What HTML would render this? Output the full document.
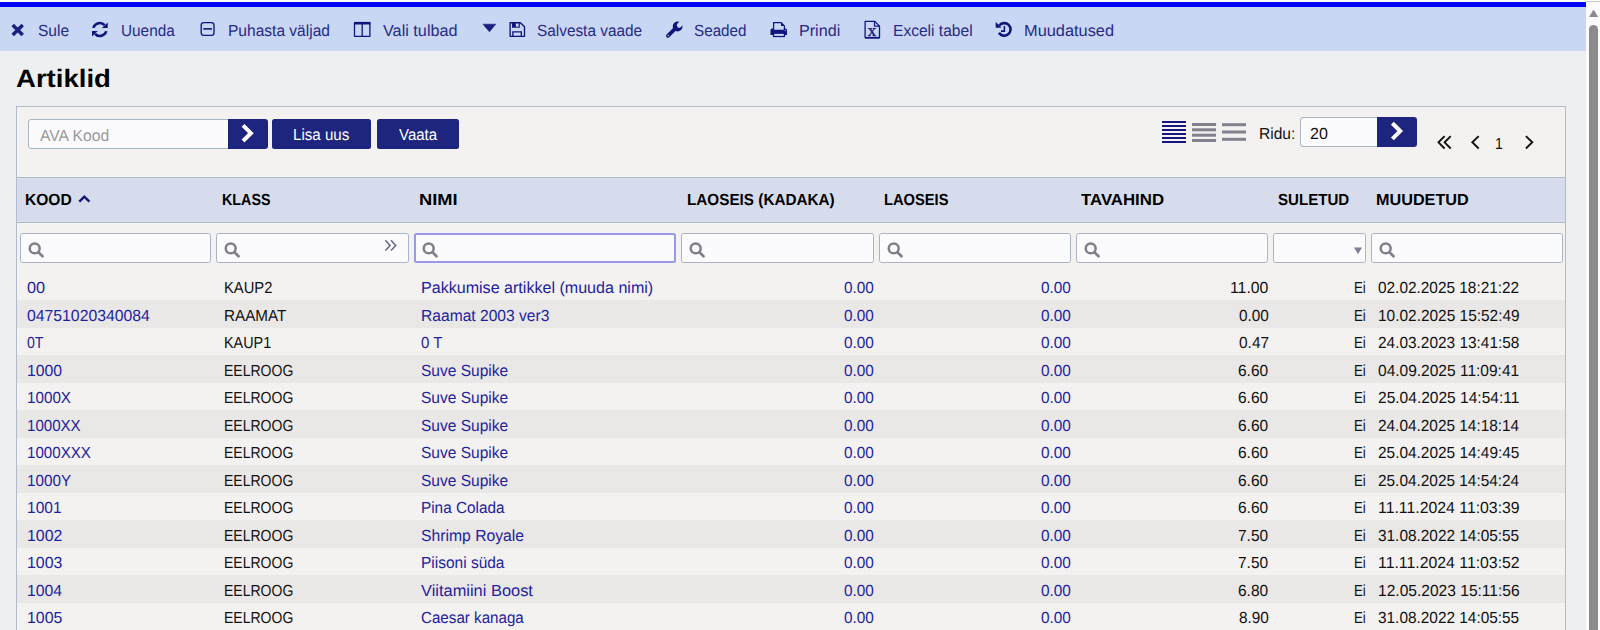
<!DOCTYPE html>
<html lang="et">
<head>
<meta charset="utf-8">
<title>Artiklid</title>
<style>
html,body{margin:0;padding:0}
body{text-rendering:geometricPrecision;width:1600px;height:630px;overflow:hidden;background:#eeeff1;font-family:"Liberation Sans",sans-serif;position:relative}
.t{position:absolute;white-space:pre;display:block}
a{color:inherit;text-decoration:none}
h1{margin:0;font-size:0}
svg{position:absolute;display:block;overflow:visible}
.topline{position:absolute;left:0;top:0;width:1586px;height:2px;background:#fdfdfc}
.bluebar{position:absolute;left:0;top:2px;width:1586px;height:5px;background:#0000ff}
.toolbar-bg{position:absolute;left:0;top:7px;width:1586px;height:44px;background:#c9d7f4}
.panel-bg{position:absolute;left:16px;top:106px;width:1548px;height:540px;border:1px solid #b3bacb;background:#f3f2f1}
.btn{position:absolute;border:0;padding:0;margin:0;background:#1d257e;border-radius:2.5px}
.inp{position:absolute;box-sizing:border-box;border:1px solid #abb3c7;border-radius:2.5px;background:#fbfbfe}
.inp.focus{border:2px solid #9799ea}
table.grid{border-collapse:collapse;border-spacing:0}
td,th{padding:0;font-weight:normal}
.hd-bg{position:absolute;left:17px;top:177px;width:1548px;height:44px;background:#d7dced;border-top:1px solid #b0b8cb;border-bottom:1px solid #b0b8cb}
td.stripe{position:absolute;left:17px;width:1548px;height:27.5px;background:#eae8e7;padding:0}
.sb{position:absolute;left:1586px;top:0;width:14px;height:630px;background:#fcfcfc}
.sbline{position:absolute;left:0;top:1px;width:14px;height:1px;background:#c9c9c9}
.sbthumb{position:absolute;left:3.3px;top:25px;width:8.7px;height:620px;border-radius:4.5px;background:#8b8b8b}

</style>
</head>
<body>
<div class="topline"></div>
<div class="bluebar"></div>
<nav class="toolbar"><div class="toolbar-bg"></div>
<a class="tb"><svg style="left:8px;top:20px" width="20" height="20" viewBox="8 20 20 20" ><path d="M12.7 24.9L22.7 34.9M22.7 24.9L12.7 34.9" stroke="#1a1f80" stroke-width="3.5" fill="none"/></svg><span class="t" style="left:37.51px;top:20.80px;transform-origin:0 0;transform:scaleX(0.9656);font-size:16.1px;line-height:20px;color:#262b85;">Sule</span></a>
<a class="tb"><svg style="left:88px;top:18px" width="24" height="24" viewBox="88 18 24 24" ><path d="M93.40 29.50A6.45 6.45 0 0 1 104.64 25.18" stroke="#13137c" stroke-width="2.6" fill="none"/><rect x="90" y="27.9" width="7" height="3" fill="#c9d7f4"/><path d="M107.7 22.4V28.1H101.9Z" fill="#13137c"/><g transform="rotate(180 99.85 29.5)"><path d="M93.40 29.50A6.45 6.45 0 0 1 104.64 25.18" stroke="#13137c" stroke-width="2.6" fill="none"/><rect x="90" y="27.9" width="7" height="3" fill="#c9d7f4"/><path d="M107.7 22.4V28.1H101.9Z" fill="#13137c"/></g></svg><span class="t" style="left:120.84px;top:20.80px;transform-origin:0 0;transform:scaleX(0.9533);font-size:16.1px;line-height:20px;color:#262b85;">Uuenda</span></a>
<a class="tb"><svg style="left:197px;top:18px" width="22" height="22" viewBox="197 18 22 22" ><rect x="201.2" y="22.6" width="12.8" height="12.8" rx="2.6" fill="none" stroke="#13137c" stroke-width="1.35"/><path d="M203.3 28.9H212" stroke="#13137c" stroke-width="1.6"/></svg><span class="t" style="left:228.09px;top:20.80px;transform-origin:0 0;transform:scaleX(0.9656);font-size:16.1px;line-height:20px;color:#262b85;">Puhasta väljad</span></a>
<a class="tb"><svg style="left:350px;top:18px" width="24" height="24" viewBox="350 18 24 24" ><path d="M354.5 23H369.9V36.3H354.5Z" fill="none" stroke="#13137c" stroke-width="1.3" stroke-linejoin="round"/><path d="M354 23.2H370.4" stroke="#13137c" stroke-width="2.6"/><path d="M362.2 23V36.3" stroke="#13137c" stroke-width="1.3"/></svg><span class="t" style="left:383.00px;top:20.80px;transform-origin:0 0;transform:scaleX(1.0084);font-size:16.1px;line-height:20px;color:#262b85;">Vali tulbad</span></a>
<a class="tb"><svg style="left:480px;top:20px" width="20" height="16" viewBox="480 20 20 16" ><path d="M483 24.2H495.8L489.4 31.8Z" fill="#1a1f80" stroke="#1a1f80" stroke-width="0.6" stroke-linejoin="round"/></svg><svg style="left:506px;top:18px" width="24" height="24" viewBox="506 18 24 24" ><path d="M510.1 22.7H520.4L524.5 26.8V36.3H510.1Z" fill="none" stroke="#13137c" stroke-width="1.35" stroke-linejoin="round"/><path fill-rule="evenodd" d="M512 22.7H519.8V27.7H512ZM515.9 23.1V26.8H518.6V23.1Z" fill="#13137c"/><path d="M512.9 36.3V31.9H521.3V36.3" fill="none" stroke="#13137c" stroke-width="1.35"/></svg><span class="t" style="left:537.02px;top:20.80px;transform-origin:0 0;transform:scaleX(0.9547);font-size:16.1px;line-height:20px;color:#262b85;">Salvesta vaade</span></a>
<a class="tb"><svg style="left:662px;top:18px" width="24" height="24" viewBox="662 18 24 24" ><path d="M667.9 35.9L675.2 28.6" stroke="#13137c" stroke-width="3.7" stroke-linecap="round"/><circle cx="677.6" cy="26.5" r="4.9" fill="#13137c"/><path d="M679.2 25.2L685 19.4" stroke="#c9d7f4" stroke-width="4.8" stroke-linecap="round"/><circle cx="668.3" cy="35.5" r="0.7" fill="#c9d7f4"/></svg><span class="t" style="left:694.02px;top:20.80px;transform-origin:0 0;transform:scaleX(0.9464);font-size:16.1px;line-height:20px;color:#262b85;">Seaded</span></a>
<a class="tb"><svg style="left:767px;top:18px" width="24" height="24" viewBox="767 18 24 24" ><path d="M773.6 30.5V22.5H781L784.4 25.9V30.5Z" fill="#c9d7f4" stroke="#13137c" stroke-width="1.25" stroke-linejoin="round"/><path d="M781 22.5V25.9H784.4Z" fill="#13137c"/><path d="M770.5 35V30Q770.5 28.4 772.1 28.4H773V29.7H785V28.4H785.4Q787 28.4 787 30V35Z" fill="#13137c"/><rect x="773.6" y="33.2" width="10.8" height="3.3" fill="#c9d7f4" stroke="#13137c" stroke-width="1.25"/><circle cx="785.3" cy="30.5" r="0.6" fill="#c9d7f4"/></svg><span class="t" style="left:799.04px;top:20.80px;transform-origin:0 0;transform:scaleX(1.0015);font-size:16.1px;line-height:20px;color:#262b85;">Prindi</span></a>
<a class="tb"><svg style="left:860px;top:16px" width="26" height="26" viewBox="860 16 26 26" ><path d="M865.1 21.4H874.8L879.5 26.1V37.6H865.1Z" fill="none" stroke="#13137c" stroke-width="1.3" stroke-linejoin="round"/><path d="M874.5 21.4V26.2H879.4" fill="none" stroke="#13137c" stroke-width="1.2"/><path d="M865 37.8H879.6" stroke="#13137c" stroke-width="1.7"/><text x="872.1" y="35.9" text-anchor="middle" font-family="Liberation Serif, serif" font-weight="400" font-size="17" fill="#13137c" stroke="#13137c" stroke-width="0.35">x</text></svg><span class="t" style="left:892.58px;top:20.80px;transform-origin:0 0;transform:scaleX(0.9673);font-size:16.1px;line-height:20px;color:#262b85;">Exceli tabel</span></a>
<a class="tb"><svg style="left:992px;top:18px" width="24" height="24" viewBox="992 18 24 24" ><path d="M999.29 25.52A6.3 6.3 0 1 1 998.91 32.74" stroke="#13137c" stroke-width="2.6" fill="none"/><path d="M995.7 22V27.8H1001.6Z" fill="#13137c"/><path d="M1004.4 26V31.1H1001" fill="none" stroke="#13137c" stroke-width="1.55"/></svg><span class="t" style="left:1024.02px;top:20.80px;transform-origin:0 0;transform:scaleX(1.0168);font-size:16.1px;line-height:20px;color:#262b85;">Muudatused</span></a>
</nav>
<h1><span class="t" style="left:16.07px;top:63.80px;transform-origin:0 0;transform:scaleX(1.0931);font-size:25.2px;line-height:30px;color:#000;font-weight:700;">Artiklid</span></h1>
<section class="panel"><div class="panel-bg"></div>
<div class="field"><div class="inp" style="left:28px;top:119px;width:201px;height:30px;border-radius:3px 0 0 3px"></div><span class="t" style="left:39.50px;top:125.80px;transform-origin:0 0;transform:scaleX(0.9747);font-size:16.1px;line-height:20px;color:#999;">AVA Kood</span></div>
<div class="field"><div class="btn" style="left:228px;top:119px;width:40px;height:30px;border-radius:0 3px 3px 0"></div><svg style="left:228px;top:119px" width="40" height="30" viewBox="228 119 40 30" ><path d="M243.05 125.30000000000001L250.9 133.15L243.05 141.0" fill="none" stroke="#fdfdff" stroke-width="4" stroke-linecap="butt"/></svg></div>
<div class="field"><div class="btn" style="left:272px;top:119px;width:99px;height:30px"></div><span class="t" style="left:293.12px;top:124.80px;transform-origin:0 0;transform:scaleX(0.9398);font-size:16.1px;line-height:20px;color:#fff;">Lisa uus</span></div>
<div class="field"><div class="btn" style="left:377px;top:119px;width:82px;height:30px"></div><span class="t" style="left:398.50px;top:124.80px;transform-origin:0 0;transform:scaleX(0.9321);font-size:16.1px;line-height:20px;color:#fff;">Vaata</span></div>
<svg style="left:1160px;top:118px" width="90" height="28" viewBox="1160 118 90 28" ><rect x="1162" y="121" width="24" height="2" fill="#14147f"/><rect x="1162" y="125" width="24" height="2" fill="#14147f"/><rect x="1162" y="129" width="24" height="2" fill="#14147f"/><rect x="1162" y="133" width="24" height="2" fill="#14147f"/><rect x="1162" y="137" width="24" height="2" fill="#14147f"/><rect x="1162" y="141" width="24" height="2" fill="#14147f"/><rect x="1192" y="123" width="24" height="3" fill="#82828f"/><rect x="1192" y="128.3" width="24" height="3" fill="#82828f"/><rect x="1192" y="133.7" width="24" height="3" fill="#82828f"/><rect x="1192" y="139" width="24" height="3" fill="#82828f"/><rect x="1222" y="123.2" width="24" height="3" fill="#82828f"/><rect x="1222" y="130.5" width="24" height="3" fill="#82828f"/><rect x="1222" y="137.8" width="24" height="3" fill="#82828f"/></svg><label><span class="t" style="left:1259.08px;top:123.80px;transform-origin:0 0;transform:scaleX(0.9664);font-size:16.1px;line-height:20px;color:#111;">Ridu:</span></label>
<div class="field"><div class="inp" style="left:1300px;top:117px;width:78px;height:30px;border-radius:3px 0 0 3px"></div><span class="t" style="left:1310.25px;top:123.80px;transform-origin:0 0;transform:scaleX(0.9969);font-size:16.1px;line-height:20px;color:#111;">20</span></div>
<div class="field"><div class="btn" style="left:1377px;top:117px;width:40px;height:30px;border-radius:0 3px 3px 0"></div><svg style="left:1377px;top:117px" width="40" height="30" viewBox="1377 117 40 30" ><path d="M1392.35 123.25L1400.2 131.1L1392.35 138.95" fill="none" stroke="#fdfdff" stroke-width="4" stroke-linecap="butt"/></svg></div>
<div class="pager"><svg style="left:1434px;top:132px" width="22" height="22" viewBox="1434 132 22 22" ><path d="M1444.6 136.10000000000002L1438.5 142.3L1444.6 148.5" fill="none" stroke="#111" stroke-width="1.9" stroke-linecap="butt"/><path d="M1450.7 136.10000000000002L1444.6 142.3L1450.7 148.5" fill="none" stroke="#111" stroke-width="1.9" stroke-linecap="butt"/></svg><svg style="left:1466px;top:132px" width="18" height="22" viewBox="1466 132 18 22" ><path d="M1478.7 136.10000000000002L1472.3 142.3L1478.7 148.5" fill="none" stroke="#111" stroke-width="1.9" stroke-linecap="butt"/></svg><span class="t" style="left:1495.12px;top:133.80px;transform-origin:0 0;transform:scaleX(0.8773);font-size:16.1px;line-height:20px;color:#111;">1</span><svg style="left:1520px;top:132px" width="18" height="22" viewBox="1520 132 18 22" ><path d="M1525.9 136.10000000000002L1532.3 142.3L1525.9 148.5" fill="none" stroke="#111" stroke-width="1.9" stroke-linecap="butt"/></svg></div>
</section>
<div class="hd-bg"></div>
<table class="grid">
<thead>
<tr class="hd"><th><span class="t" style="left:24.83px;top:189.80px;transform-origin:0 0;transform:scaleX(0.9671);font-size:16.1px;line-height:20px;color:#000;font-weight:700;">KOOD</span><svg style="left:76px;top:190px" width="18" height="16" viewBox="76 190 18 16" ><path d="M79.3 201.6L84.35 196.6L89.4 201.6" fill="none" stroke="#14147f" stroke-width="2.4"/></svg></th><th><span class="t" style="left:221.91px;top:189.80px;transform-origin:0 0;transform:scaleX(0.8883);font-size:16.1px;line-height:20px;color:#000;font-weight:700;">KLASS</span></th><th><span class="t" style="left:418.66px;top:189.80px;transform-origin:0 0;transform:scaleX(1.1365);font-size:16.1px;line-height:20px;color:#000;font-weight:700;">NIMI</span></th><th><span class="t" style="left:686.84px;top:189.80px;transform-origin:0 0;transform:scaleX(0.9491);font-size:16.1px;line-height:20px;color:#000;font-weight:700;">LAOSEIS (KADAKA)</span></th><th><span class="t" style="left:883.88px;top:189.80px;transform-origin:0 0;transform:scaleX(0.9127);font-size:16.1px;line-height:20px;color:#000;font-weight:700;">LAOSEIS</span></th><th><span class="t" style="left:1081.00px;top:189.80px;transform-origin:0 0;transform:scaleX(1.0438);font-size:16.1px;line-height:20px;color:#000;font-weight:700;">TAVAHIND</span></th><th><span class="t" style="left:1278.26px;top:189.80px;transform-origin:0 0;transform:scaleX(0.9373);font-size:16.1px;line-height:20px;color:#000;font-weight:700;">SULETUD</span></th><th><span class="t" style="left:1376.29px;top:189.80px;transform-origin:0 0;transform:scaleX(1.0071);font-size:16.1px;line-height:20px;color:#000;font-weight:700;">MUUDETUD</span></th></tr>
<tr class="flt"><td><div class="inp" style="left:20px;top:233px;width:191px;height:30px"></div><svg style="left:25px;top:240px" width="22" height="20" viewBox="25 240 22 20" ><circle cx="34.7" cy="248.4" r="4.95" fill="none" stroke="#7f7f8a" stroke-width="2.5"/><path d="M38.6 252.4L42.5 256.3" stroke="#7f7f8a" stroke-width="2.7" stroke-linecap="round"/></svg></td><td><div class="inp" style="left:216px;top:233px;width:193px;height:30px"></div><svg style="left:221px;top:240px" width="22" height="20" viewBox="221 240 22 20" ><circle cx="230.7" cy="248.4" r="4.95" fill="none" stroke="#7f7f8a" stroke-width="2.5"/><path d="M234.6 252.4L238.5 256.3" stroke="#7f7f8a" stroke-width="2.7" stroke-linecap="round"/></svg><svg style="left:382px;top:236px" width="18" height="18" viewBox="382 236 18 18" ><path d="M385.4 240.20000000000002L390.1 245.4L385.4 250.6" fill="none" stroke="#62658a" stroke-width="1.5" stroke-linecap="butt"/><path d="M391 240.20000000000002L395.7 245.4L391 250.6" fill="none" stroke="#62658a" stroke-width="1.5" stroke-linecap="butt"/></svg></td><td><div class="inp focus" style="left:414px;top:233px;width:262px;height:30px"></div><svg style="left:419px;top:240px" width="22" height="20" viewBox="419 240 22 20" ><circle cx="428.7" cy="248.4" r="4.95" fill="none" stroke="#7f7f8a" stroke-width="2.5"/><path d="M432.59999999999997 252.4L436.5 256.3" stroke="#7f7f8a" stroke-width="2.7" stroke-linecap="round"/></svg></td><td><div class="inp" style="left:681px;top:233px;width:193px;height:30px"></div><svg style="left:686px;top:240px" width="22" height="20" viewBox="686 240 22 20" ><circle cx="695.7" cy="248.4" r="4.95" fill="none" stroke="#7f7f8a" stroke-width="2.5"/><path d="M699.6 252.4L703.5 256.3" stroke="#7f7f8a" stroke-width="2.7" stroke-linecap="round"/></svg></td><td><div class="inp" style="left:879px;top:233px;width:192px;height:30px"></div><svg style="left:884px;top:240px" width="22" height="20" viewBox="884 240 22 20" ><circle cx="893.7" cy="248.4" r="4.95" fill="none" stroke="#7f7f8a" stroke-width="2.5"/><path d="M897.6 252.4L901.5 256.3" stroke="#7f7f8a" stroke-width="2.7" stroke-linecap="round"/></svg></td><td><div class="inp" style="left:1076px;top:233px;width:192px;height:30px"></div><svg style="left:1081px;top:240px" width="22" height="20" viewBox="1081 240 22 20" ><circle cx="1090.7" cy="248.4" r="4.95" fill="none" stroke="#7f7f8a" stroke-width="2.5"/><path d="M1094.6000000000001 252.4L1098.5 256.3" stroke="#7f7f8a" stroke-width="2.7" stroke-linecap="round"/></svg></td><td><div class="inp sel" style="left:1273px;top:233px;width:93px;height:30px"></div><svg style="left:1350px;top:244px" width="16" height="14" viewBox="1350 244 16 14" ><path d="M1354 247.6H1362L1358 254.2Z" fill="#7f7f93"/></svg></td><td><div class="inp" style="left:1371px;top:233px;width:192px;height:30px"></div><svg style="left:1376px;top:240px" width="22" height="20" viewBox="1376 240 22 20" ><circle cx="1385.7" cy="248.4" r="4.95" fill="none" stroke="#7f7f8a" stroke-width="2.5"/><path d="M1389.6000000000001 252.4L1393.5 256.3" stroke="#7f7f8a" stroke-width="2.7" stroke-linecap="round"/></svg></td></tr>
</thead>
<tbody>
<tr><td><a><span class="t" style="left:26.59px;top:277.80px;transform-origin:0 0;transform:scaleX(1.0115);font-size:16.1px;line-height:20px;color:#1e23a0;">00</span></a></td><td><span class="t" style="left:224.25px;top:277.80px;transform-origin:0 0;transform:scaleX(0.9158);font-size:16.1px;line-height:20px;color:#111;">KAUP2</span></td><td><a><span class="t" style="left:421.04px;top:277.80px;transform-origin:0 0;transform:scaleX(0.9986);font-size:16.1px;line-height:20px;color:#1e23a0;">Pakkumise artikkel (muuda nimi)</span></a></td><td><a><span class="t" style="left:844.02px;top:277.80px;transform-origin:0 0;transform:scaleX(0.9530);font-size:16.1px;line-height:20px;color:#1e23a0;">0.00</span></a></td><td><a><span class="t" style="left:1041.02px;top:277.80px;transform-origin:0 0;transform:scaleX(0.9530);font-size:16.1px;line-height:20px;color:#1e23a0;">0.00</span></a></td><td><span class="t" style="left:1230.01px;top:277.80px;transform-origin:0 0;transform:scaleX(0.9818);font-size:16.1px;line-height:20px;color:#111;">11.00</span></td><td><span class="t" style="left:1353.76px;top:277.80px;transform-origin:0 0;transform:scaleX(0.8252);font-size:16.1px;line-height:20px;color:#111;">Ei</span></td><td><span class="t" style="left:1378.42px;top:277.80px;transform-origin:0 0;transform:scaleX(0.9559);font-size:16.1px;line-height:20px;color:#111;">02.02.2025 18:21:22</span></td></tr>
<tr class="odd"><td class="stripe" style="top:300.0px"></td><td><a><span class="t" style="left:26.61px;top:305.80px;transform-origin:0 0;transform:scaleX(0.9803);font-size:16.1px;line-height:20px;color:#1e23a0;">04751020340084</span></a></td><td><span class="t" style="left:224.21px;top:305.80px;transform-origin:0 0;transform:scaleX(0.9462);font-size:16.1px;line-height:20px;color:#111;">RAAMAT</span></td><td><a><span class="t" style="left:421.08px;top:305.80px;transform-origin:0 0;transform:scaleX(0.9698);font-size:16.1px;line-height:20px;color:#1e23a0;">Raamat 2003 ver3</span></a></td><td><a><span class="t" style="left:844.02px;top:305.80px;transform-origin:0 0;transform:scaleX(0.9530);font-size:16.1px;line-height:20px;color:#1e23a0;">0.00</span></a></td><td><a><span class="t" style="left:1041.02px;top:305.80px;transform-origin:0 0;transform:scaleX(0.9530);font-size:16.1px;line-height:20px;color:#1e23a0;">0.00</span></a></td><td><span class="t" style="left:1238.52px;top:305.80px;transform-origin:0 0;transform:scaleX(0.9530);font-size:16.1px;line-height:20px;color:#111;">0.00</span></td><td><span class="t" style="left:1353.76px;top:305.80px;transform-origin:0 0;transform:scaleX(0.8252);font-size:16.1px;line-height:20px;color:#111;">Ei</span></td><td><span class="t" style="left:1377.93px;top:305.80px;transform-origin:0 0;transform:scaleX(0.9592);font-size:16.1px;line-height:20px;color:#111;">10.02.2025 15:52:49</span></td></tr>
<tr><td><a><span class="t" style="left:26.66px;top:332.80px;transform-origin:0 0;transform:scaleX(0.8773);font-size:16.1px;line-height:20px;color:#1e23a0;">0T</span></a></td><td><span class="t" style="left:224.28px;top:332.80px;transform-origin:0 0;transform:scaleX(0.8941);font-size:16.1px;line-height:20px;color:#111;">KAUP1</span></td><td><a><span class="t" style="left:421.03px;top:332.80px;transform-origin:0 0;transform:scaleX(0.9296);font-size:16.1px;line-height:20px;color:#1e23a0;">0 T</span></a></td><td><a><span class="t" style="left:844.02px;top:332.80px;transform-origin:0 0;transform:scaleX(0.9530);font-size:16.1px;line-height:20px;color:#1e23a0;">0.00</span></a></td><td><a><span class="t" style="left:1041.02px;top:332.80px;transform-origin:0 0;transform:scaleX(0.9530);font-size:16.1px;line-height:20px;color:#1e23a0;">0.00</span></a></td><td><span class="t" style="left:1238.52px;top:332.80px;transform-origin:0 0;transform:scaleX(0.9609);font-size:16.1px;line-height:20px;color:#111;">0.47</span></td><td><span class="t" style="left:1353.76px;top:332.80px;transform-origin:0 0;transform:scaleX(0.8252);font-size:16.1px;line-height:20px;color:#111;">Ei</span></td><td><span class="t" style="left:1378.18px;top:332.80px;transform-origin:0 0;transform:scaleX(0.9575);font-size:16.1px;line-height:20px;color:#111;">24.03.2023 13:41:58</span></td></tr>
<tr class="odd"><td class="stripe" style="top:355.0px"></td><td><a><span class="t" style="left:27.01px;top:360.80px;transform-origin:0 0;transform:scaleX(0.9794);font-size:16.1px;line-height:20px;color:#1e23a0;">1000</span></a></td><td><span class="t" style="left:224.30px;top:360.80px;transform-origin:0 0;transform:scaleX(0.8708);font-size:16.1px;line-height:20px;color:#111;">EELROOG</span></td><td><a><span class="t" style="left:421.02px;top:360.80px;transform-origin:0 0;transform:scaleX(0.9637);font-size:16.1px;line-height:20px;color:#1e23a0;">Suve Supike</span></a></td><td><a><span class="t" style="left:844.02px;top:360.80px;transform-origin:0 0;transform:scaleX(0.9530);font-size:16.1px;line-height:20px;color:#1e23a0;">0.00</span></a></td><td><a><span class="t" style="left:1041.02px;top:360.80px;transform-origin:0 0;transform:scaleX(0.9530);font-size:16.1px;line-height:20px;color:#1e23a0;">0.00</span></a></td><td><span class="t" style="left:1238.27px;top:360.80px;transform-origin:0 0;transform:scaleX(0.9609);font-size:16.1px;line-height:20px;color:#111;">6.60</span></td><td><span class="t" style="left:1353.76px;top:360.80px;transform-origin:0 0;transform:scaleX(0.8252);font-size:16.1px;line-height:20px;color:#111;">Ei</span></td><td><span class="t" style="left:1378.42px;top:360.80px;transform-origin:0 0;transform:scaleX(0.9637);font-size:16.1px;line-height:20px;color:#111;">04.09.2025 11:09:41</span></td></tr>
<tr><td><a><span class="t" style="left:27.05px;top:387.80px;transform-origin:0 0;transform:scaleX(0.9454);font-size:16.1px;line-height:20px;color:#1e23a0;">1000X</span></a></td><td><span class="t" style="left:224.30px;top:387.80px;transform-origin:0 0;transform:scaleX(0.8708);font-size:16.1px;line-height:20px;color:#111;">EELROOG</span></td><td><a><span class="t" style="left:421.02px;top:387.80px;transform-origin:0 0;transform:scaleX(0.9637);font-size:16.1px;line-height:20px;color:#1e23a0;">Suve Supike</span></a></td><td><a><span class="t" style="left:844.02px;top:387.80px;transform-origin:0 0;transform:scaleX(0.9530);font-size:16.1px;line-height:20px;color:#1e23a0;">0.00</span></a></td><td><a><span class="t" style="left:1041.02px;top:387.80px;transform-origin:0 0;transform:scaleX(0.9530);font-size:16.1px;line-height:20px;color:#1e23a0;">0.00</span></a></td><td><span class="t" style="left:1238.27px;top:387.80px;transform-origin:0 0;transform:scaleX(0.9609);font-size:16.1px;line-height:20px;color:#111;">6.60</span></td><td><span class="t" style="left:1353.76px;top:387.80px;transform-origin:0 0;transform:scaleX(0.8252);font-size:16.1px;line-height:20px;color:#111;">Ei</span></td><td><span class="t" style="left:1378.17px;top:387.80px;transform-origin:0 0;transform:scaleX(0.9654);font-size:16.1px;line-height:20px;color:#111;">25.04.2025 14:54:11</span></td></tr>
<tr class="odd"><td class="stripe" style="top:410.0px"></td><td><a><span class="t" style="left:27.06px;top:415.80px;transform-origin:0 0;transform:scaleX(0.9374);font-size:16.1px;line-height:20px;color:#1e23a0;">1000XX</span></a></td><td><span class="t" style="left:224.30px;top:415.80px;transform-origin:0 0;transform:scaleX(0.8708);font-size:16.1px;line-height:20px;color:#111;">EELROOG</span></td><td><a><span class="t" style="left:421.02px;top:415.80px;transform-origin:0 0;transform:scaleX(0.9637);font-size:16.1px;line-height:20px;color:#1e23a0;">Suve Supike</span></a></td><td><a><span class="t" style="left:844.02px;top:415.80px;transform-origin:0 0;transform:scaleX(0.9530);font-size:16.1px;line-height:20px;color:#1e23a0;">0.00</span></a></td><td><a><span class="t" style="left:1041.02px;top:415.80px;transform-origin:0 0;transform:scaleX(0.9530);font-size:16.1px;line-height:20px;color:#1e23a0;">0.00</span></a></td><td><span class="t" style="left:1238.27px;top:415.80px;transform-origin:0 0;transform:scaleX(0.9609);font-size:16.1px;line-height:20px;color:#111;">6.60</span></td><td><span class="t" style="left:1353.76px;top:415.80px;transform-origin:0 0;transform:scaleX(0.8252);font-size:16.1px;line-height:20px;color:#111;">Ei</span></td><td><span class="t" style="left:1378.18px;top:415.80px;transform-origin:0 0;transform:scaleX(0.9559);font-size:16.1px;line-height:20px;color:#111;">24.04.2025 14:18:14</span></td></tr>
<tr><td><a><span class="t" style="left:27.05px;top:442.80px;transform-origin:0 0;transform:scaleX(0.9394);font-size:16.1px;line-height:20px;color:#1e23a0;">1000XXX</span></a></td><td><span class="t" style="left:224.30px;top:442.80px;transform-origin:0 0;transform:scaleX(0.8708);font-size:16.1px;line-height:20px;color:#111;">EELROOG</span></td><td><a><span class="t" style="left:421.02px;top:442.80px;transform-origin:0 0;transform:scaleX(0.9637);font-size:16.1px;line-height:20px;color:#1e23a0;">Suve Supike</span></a></td><td><a><span class="t" style="left:844.02px;top:442.80px;transform-origin:0 0;transform:scaleX(0.9530);font-size:16.1px;line-height:20px;color:#1e23a0;">0.00</span></a></td><td><a><span class="t" style="left:1041.02px;top:442.80px;transform-origin:0 0;transform:scaleX(0.9530);font-size:16.1px;line-height:20px;color:#1e23a0;">0.00</span></a></td><td><span class="t" style="left:1238.27px;top:442.80px;transform-origin:0 0;transform:scaleX(0.9609);font-size:16.1px;line-height:20px;color:#111;">6.60</span></td><td><span class="t" style="left:1353.76px;top:442.80px;transform-origin:0 0;transform:scaleX(0.8252);font-size:16.1px;line-height:20px;color:#111;">Ei</span></td><td><span class="t" style="left:1378.18px;top:442.80px;transform-origin:0 0;transform:scaleX(0.9575);font-size:16.1px;line-height:20px;color:#111;">25.04.2025 14:49:45</span></td></tr>
<tr class="odd"><td class="stripe" style="top:465.0px"></td><td><a><span class="t" style="left:27.05px;top:470.80px;transform-origin:0 0;transform:scaleX(0.9476);font-size:16.1px;line-height:20px;color:#1e23a0;">1000Y</span></a></td><td><span class="t" style="left:224.30px;top:470.80px;transform-origin:0 0;transform:scaleX(0.8708);font-size:16.1px;line-height:20px;color:#111;">EELROOG</span></td><td><a><span class="t" style="left:421.02px;top:470.80px;transform-origin:0 0;transform:scaleX(0.9637);font-size:16.1px;line-height:20px;color:#1e23a0;">Suve Supike</span></a></td><td><a><span class="t" style="left:844.02px;top:470.80px;transform-origin:0 0;transform:scaleX(0.9530);font-size:16.1px;line-height:20px;color:#1e23a0;">0.00</span></a></td><td><a><span class="t" style="left:1041.02px;top:470.80px;transform-origin:0 0;transform:scaleX(0.9530);font-size:16.1px;line-height:20px;color:#1e23a0;">0.00</span></a></td><td><span class="t" style="left:1238.27px;top:470.80px;transform-origin:0 0;transform:scaleX(0.9609);font-size:16.1px;line-height:20px;color:#111;">6.60</span></td><td><span class="t" style="left:1353.76px;top:470.80px;transform-origin:0 0;transform:scaleX(0.8252);font-size:16.1px;line-height:20px;color:#111;">Ei</span></td><td><span class="t" style="left:1378.18px;top:470.80px;transform-origin:0 0;transform:scaleX(0.9559);font-size:16.1px;line-height:20px;color:#111;">25.04.2025 14:54:24</span></td></tr>
<tr><td><a><span class="t" style="left:27.03px;top:497.80px;transform-origin:0 0;transform:scaleX(0.9661);font-size:16.1px;line-height:20px;color:#1e23a0;">1001</span></a></td><td><span class="t" style="left:224.30px;top:497.80px;transform-origin:0 0;transform:scaleX(0.8708);font-size:16.1px;line-height:20px;color:#111;">EELROOG</span></td><td><a><span class="t" style="left:421.10px;top:497.80px;transform-origin:0 0;transform:scaleX(0.9519);font-size:16.1px;line-height:20px;color:#1e23a0;">Pina Colada</span></a></td><td><a><span class="t" style="left:844.02px;top:497.80px;transform-origin:0 0;transform:scaleX(0.9530);font-size:16.1px;line-height:20px;color:#1e23a0;">0.00</span></a></td><td><a><span class="t" style="left:1041.02px;top:497.80px;transform-origin:0 0;transform:scaleX(0.9530);font-size:16.1px;line-height:20px;color:#1e23a0;">0.00</span></a></td><td><span class="t" style="left:1238.27px;top:497.80px;transform-origin:0 0;transform:scaleX(0.9609);font-size:16.1px;line-height:20px;color:#111;">6.60</span></td><td><span class="t" style="left:1353.76px;top:497.80px;transform-origin:0 0;transform:scaleX(0.8252);font-size:16.1px;line-height:20px;color:#111;">Ei</span></td><td><span class="t" style="left:1377.91px;top:497.80px;transform-origin:0 0;transform:scaleX(0.9833);font-size:16.1px;line-height:20px;color:#111;">11.11.2024 11:03:39</span></td></tr>
<tr class="odd"><td class="stripe" style="top:520.0px"></td><td><a><span class="t" style="left:27.01px;top:525.80px;transform-origin:0 0;transform:scaleX(0.9866);font-size:16.1px;line-height:20px;color:#1e23a0;">1002</span></a></td><td><span class="t" style="left:224.30px;top:525.80px;transform-origin:0 0;transform:scaleX(0.8708);font-size:16.1px;line-height:20px;color:#111;">EELROOG</span></td><td><a><span class="t" style="left:421.01px;top:525.80px;transform-origin:0 0;transform:scaleX(0.9767);font-size:16.1px;line-height:20px;color:#1e23a0;">Shrimp Royale</span></a></td><td><a><span class="t" style="left:844.02px;top:525.80px;transform-origin:0 0;transform:scaleX(0.9530);font-size:16.1px;line-height:20px;color:#1e23a0;">0.00</span></a></td><td><a><span class="t" style="left:1041.02px;top:525.80px;transform-origin:0 0;transform:scaleX(0.9530);font-size:16.1px;line-height:20px;color:#1e23a0;">0.00</span></a></td><td><span class="t" style="left:1238.27px;top:525.80px;transform-origin:0 0;transform:scaleX(0.9609);font-size:16.1px;line-height:20px;color:#111;">7.50</span></td><td><span class="t" style="left:1353.76px;top:525.80px;transform-origin:0 0;transform:scaleX(0.8252);font-size:16.1px;line-height:20px;color:#111;">Ei</span></td><td><span class="t" style="left:1378.42px;top:525.80px;transform-origin:0 0;transform:scaleX(0.9559);font-size:16.1px;line-height:20px;color:#111;">31.08.2022 14:05:55</span></td></tr>
<tr><td><a><span class="t" style="left:27.01px;top:552.80px;transform-origin:0 0;transform:scaleX(0.9866);font-size:16.1px;line-height:20px;color:#1e23a0;">1003</span></a></td><td><span class="t" style="left:224.30px;top:552.80px;transform-origin:0 0;transform:scaleX(0.8708);font-size:16.1px;line-height:20px;color:#111;">EELROOG</span></td><td><a><span class="t" style="left:421.09px;top:552.80px;transform-origin:0 0;transform:scaleX(0.9620);font-size:16.1px;line-height:20px;color:#1e23a0;">Piisoni süda</span></a></td><td><a><span class="t" style="left:844.02px;top:552.80px;transform-origin:0 0;transform:scaleX(0.9530);font-size:16.1px;line-height:20px;color:#1e23a0;">0.00</span></a></td><td><a><span class="t" style="left:1041.02px;top:552.80px;transform-origin:0 0;transform:scaleX(0.9530);font-size:16.1px;line-height:20px;color:#1e23a0;">0.00</span></a></td><td><span class="t" style="left:1238.27px;top:552.80px;transform-origin:0 0;transform:scaleX(0.9609);font-size:16.1px;line-height:20px;color:#111;">7.50</span></td><td><span class="t" style="left:1353.76px;top:552.80px;transform-origin:0 0;transform:scaleX(0.8252);font-size:16.1px;line-height:20px;color:#111;">Ei</span></td><td><span class="t" style="left:1377.91px;top:552.80px;transform-origin:0 0;transform:scaleX(0.9833);font-size:16.1px;line-height:20px;color:#111;">11.11.2024 11:03:52</span></td></tr>
<tr class="odd"><td class="stripe" style="top:575.0px"></td><td><a><span class="t" style="left:27.01px;top:580.80px;transform-origin:0 0;transform:scaleX(0.9794);font-size:16.1px;line-height:20px;color:#1e23a0;">1004</span></a></td><td><span class="t" style="left:224.30px;top:580.80px;transform-origin:0 0;transform:scaleX(0.8708);font-size:16.1px;line-height:20px;color:#111;">EELROOG</span></td><td><a><span class="t" style="left:421.00px;top:580.80px;transform-origin:0 0;transform:scaleX(1.0198);font-size:16.1px;line-height:20px;color:#1e23a0;">Viitamiini Boost</span></a></td><td><a><span class="t" style="left:844.02px;top:580.80px;transform-origin:0 0;transform:scaleX(0.9530);font-size:16.1px;line-height:20px;color:#1e23a0;">0.00</span></a></td><td><a><span class="t" style="left:1041.02px;top:580.80px;transform-origin:0 0;transform:scaleX(0.9530);font-size:16.1px;line-height:20px;color:#1e23a0;">0.00</span></a></td><td><span class="t" style="left:1238.27px;top:580.80px;transform-origin:0 0;transform:scaleX(0.9609);font-size:16.1px;line-height:20px;color:#111;">6.80</span></td><td><span class="t" style="left:1353.76px;top:580.80px;transform-origin:0 0;transform:scaleX(0.8252);font-size:16.1px;line-height:20px;color:#111;">Ei</span></td><td><span class="t" style="left:1377.93px;top:580.80px;transform-origin:0 0;transform:scaleX(0.9671);font-size:16.1px;line-height:20px;color:#111;">12.05.2023 15:11:56</span></td></tr>
<tr><td><a><span class="t" style="left:27.01px;top:607.80px;transform-origin:0 0;transform:scaleX(0.9866);font-size:16.1px;line-height:20px;color:#1e23a0;">1005</span></a></td><td><span class="t" style="left:224.30px;top:607.80px;transform-origin:0 0;transform:scaleX(0.8708);font-size:16.1px;line-height:20px;color:#111;">EELROOG</span></td><td><a><span class="t" style="left:420.79px;top:607.80px;transform-origin:0 0;transform:scaleX(0.9416);font-size:16.1px;line-height:20px;color:#1e23a0;">Caesar kanaga</span></a></td><td><a><span class="t" style="left:844.02px;top:607.80px;transform-origin:0 0;transform:scaleX(0.9530);font-size:16.1px;line-height:20px;color:#1e23a0;">0.00</span></a></td><td><a><span class="t" style="left:1041.02px;top:607.80px;transform-origin:0 0;transform:scaleX(0.9530);font-size:16.1px;line-height:20px;color:#1e23a0;">0.00</span></a></td><td><span class="t" style="left:1238.52px;top:607.80px;transform-origin:0 0;transform:scaleX(0.9530);font-size:16.1px;line-height:20px;color:#111;">8.90</span></td><td><span class="t" style="left:1353.76px;top:607.80px;transform-origin:0 0;transform:scaleX(0.8252);font-size:16.1px;line-height:20px;color:#111;">Ei</span></td><td><span class="t" style="left:1378.42px;top:607.80px;transform-origin:0 0;transform:scaleX(0.9559);font-size:16.1px;line-height:20px;color:#111;">31.08.2022 14:05:55</span></td></tr>
</tbody>
</table>
<div class="sb"><div class="sbline"></div><div class="sbthumb"></div></div>
<svg style="left:1586px;top:6px" width="14" height="14" viewBox="1586 6 14 14" ><path d="M1589.1 17.1L1592.9 10.5Q1593.6 9.4 1594.3 10.5L1598.1 17.1Z" fill="#8b8b8b"/></svg>
</body>
</html>
